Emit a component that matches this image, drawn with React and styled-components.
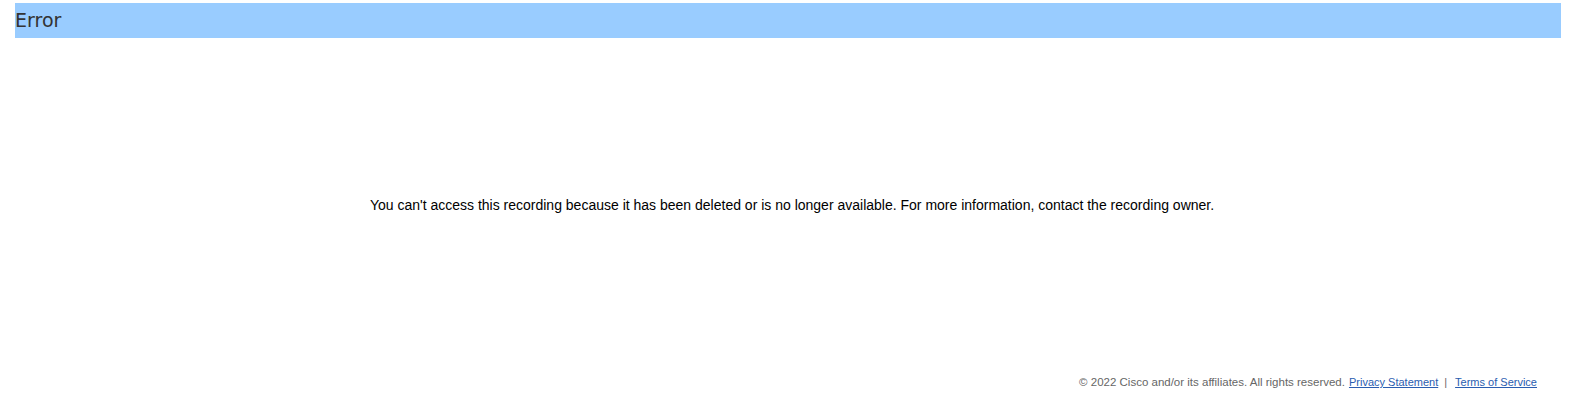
import React from 'react';
import styled, { createGlobalStyle } from 'styled-components';

const GlobalStyle = createGlobalStyle`
  html, body {
    margin: 0;
    padding: 0;
    background: #ffffff;
  }
`;

const Page = styled.div`
  display: flex;
  flex-direction: column;
  height: 414px;
  padding: 3px 15px 0;
  box-sizing: border-box;
`;

const TitleBar = styled.div`
  height: 35px;
  line-height: 35px;
  background: #99ccff;
  color: #333333;
  font-family: Verdana, "DejaVu Sans", sans-serif;
  font-size: 19px;
`;

const Content = styled.div`
  flex: 1;
  display: flex;
  justify-content: center;
  padding: 159px 0 0 8px;
`;

const Message = styled.p`
  margin: 0;
  font-family: Arial, "Liberation Sans", sans-serif;
  font-size: 14px;
  line-height: 16px;
  color: #000000;
`;

const Footer = styled.div`
  display: flex;
  justify-content: flex-end;
  align-items: center;
  padding: 0 24px 25px 0;
  font-family: Arial, "Liberation Sans", sans-serif;
  font-size: 11px;
  line-height: 14px;
  color: #666666;
`;

const Copyright = styled.span`
  font-size: 11.5px;
  margin-right: 4px;
`;

const FooterLink = styled.a`
  color: #2a5db0;
  text-decoration: underline;
`;

const Divider = styled.span`
  color: #666666;
  margin: 0 8px 0 6px;
`;

const App = () => (
  <>
    <GlobalStyle />
    <Page>
      <TitleBar>Error</TitleBar>
      <Content>
        <Message>
          You can't access this recording because it has been deleted or is no longer available. For more information, contact the recording owner.
        </Message>
      </Content>
      <Footer>
        <Copyright>© 2022 Cisco and/or its affiliates. All rights reserved.</Copyright>
        <FooterLink href="#">Privacy Statement</FooterLink>
        <Divider>|</Divider>
        <FooterLink href="#">Terms of Service</FooterLink>
      </Footer>
    </Page>
  </>
);

export default App;
